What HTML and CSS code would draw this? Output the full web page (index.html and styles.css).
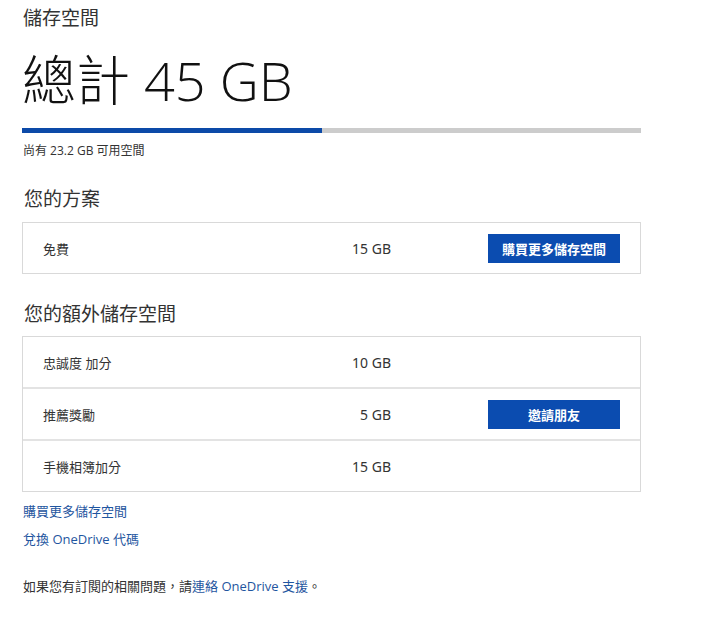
FILE: index.html
```html
<!DOCTYPE html>
<html lang="zh-Hant">
<head>
<meta charset="utf-8">
<link rel="stylesheet" href="styles.css">
</head>
<body>
<main class="page">
  <h2 class="kicker">儲存空間</h2>
  <h1 class="total">總計 45 GB</h1>
  <div class="bar"><div class="bar-used" style="width:48.5%"></div></div>
  <p class="free">尚有 23.2 GB 可用空間</p>

  <h3 class="section">您的方案</h3>
  <div class="box">
    <div class="row">
      <span class="label">免費</span>
      <span class="value">15 GB</span>
      <a class="btn">購買更多儲存空間</a>
    </div>
  </div>

  <h3 class="section section-2">您的額外儲存空間</h3>
  <div class="box box-2">
    <div class="row">
      <span class="label">忠誠度 加分</span>
      <span class="value">10 GB</span>
    </div>
    <div class="row">
      <span class="label">推薦獎勵</span>
      <span class="value">5 GB</span>
      <a class="btn">邀請朋友</a>
    </div>
    <div class="row">
      <span class="label">手機相簿加分</span>
      <span class="value">15 GB</span>
    </div>
  </div>

  <div class="links">
    <a class="link">購買更多儲存空間</a>
    <a class="link">兌換 OneDrive 代碼</a>
  </div>

  <p class="footer">如果您有訂閱的相關問題，請<a class="link">連絡 OneDrive 支援</a>。</p>
</main>
</body>
</html>
```

FILE: styles.css
```css
html, body {
  margin: 0;
  padding: 0;
  background: #ffffff;
}

body {
  font-family: "Segoe UI", "Open Sans", "Noto Sans CJK TC", sans-serif;
  color: #222222;
}

.page {
  width: 620px;
  padding: 4px 0 0 22px;
}

.kicker {
  margin: 0 0 0 1px;
  font-size: 19px;
  font-weight: 400;
  line-height: 28px;
  color: #333333;
}

.total {
  margin: 16px 0 0 0;
  font-family: "Open Sans", "Noto Sans CJK TC", sans-serif;
  font-size: 54px;
  font-weight: 300;
  line-height: 64px;
  color: #111111;
}

.bar {
  margin-top: 16px;
  height: 5px;
  width: 619px;
  background: #cccccc;
}

.bar-used {
  height: 100%;
  background: #0c4aa8;
}

.free {
  margin: 10px 0 0 1px;
  font-size: 12px;
  line-height: 16px;
  color: #333333;
}

.section {
  margin: 27px 0 0 2px;
  font-size: 19px;
  font-weight: 400;
  line-height: 26px;
  color: #333333;
}

.section-2 {
  margin-top: 27px;
}

.box {
  margin-top: 10px;
  width: 617px;
  border: 1px solid #d9d9d9;
}

.box-2 {
  margin-top: 9px;
}

.row {
  display: grid;
  grid-template-columns: 220px 128px 1fr;
  align-items: center;
  height: 50px;
  padding: 0 20px;
  font-size: 13px;
  color: #333333;
}

.row + .row {
  border-top: 2px solid #e3e3e3;
}

.value {
  text-align: right;
  font-family: "Liberation Sans Narrow", "Noto Sans", sans-serif;
  font-stretch: condensed;
  font-size: 14px;
}

.btn {
  justify-self: end;
  display: flex;
  align-items: center;
  justify-content: center;
  width: 132px;
  height: 29px;
  background: #0b4cb0;
  color: #ffffff;
  font-size: 13px;
  font-weight: 700;
}

.links {
  display: flex;
  flex-direction: column;
  align-items: flex-start;
  gap: 9px;
  margin-top: 10px;
  margin-left: 1px;
}

.link {
  color: #1f56a0;
  font-size: 13px;
  line-height: 19px;
  text-decoration: none;
}

.footer {
  margin: 28px 0 0 1px;
  font-size: 13px;
  line-height: 19px;
  color: #333333;
}
```
